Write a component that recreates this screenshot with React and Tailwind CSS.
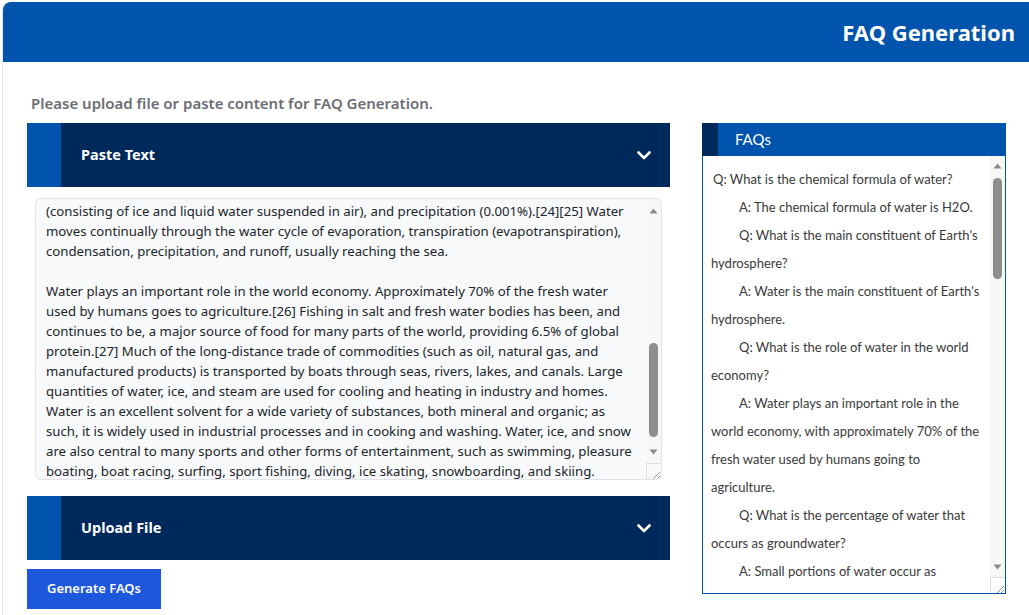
import { useEffect, useRef } from 'react';

const SOURCE_TEXT = `Water is an inorganic compound with the chemical formula H2O. It is a transparent, tasteless, odorless, and nearly colorless chemical substance, and it is the main constituent of Earth's hydrosphere and the fluids of all known living organisms (in which it acts as a solvent[20]). It is vital for all known forms of life, despite not providing food energy or organic micronutrients. Its chemical formula, H2O, indicates that each of its molecules contains one oxygen and two hydrogen atoms, connected by covalent bonds.

Because Earth's environment is relatively close to water's triple point, water exists on Earth as a solid, a liquid, and a gas.[22] It forms precipitation in the form of rain and aerosols in the form of fog. Clouds consist of suspended droplets of water and ice, its solid state.

Water covers about 71% of the Earth's surface, with seas and oceans making up most of the water volume (about 96.5%).[23] Small portions of water occur as groundwater (1.7%), in the glaciers and the ice caps of Antarctica and Greenland (1.7%), and in the air as vapor, clouds (consisting of ice and liquid water suspended in air), and precipitation (0.001%).[24][25] Water moves continually through the water cycle of evaporation, transpiration (evapotranspiration), condensation, precipitation, and runoff, usually reaching the sea.

Water plays an important role in the world economy. Approximately 70% of the fresh water used by humans goes to agriculture.[26] Fishing in salt and fresh water bodies has been, and continues to be, a major source of food for many parts of the world, providing 6.5% of global protein.[27] Much of the long-distance trade of commodities (such as oil, natural gas, and manufactured products) is transported by boats through seas, rivers, lakes, and canals. Large quantities of water, ice, and steam are used for cooling and heating in industry and homes. Water is an excellent solvent for a wide variety of substances, both mineral and organic; as such, it is widely used in industrial processes and in cooking and washing. Water, ice, and snow are also central to many sports and other forms of entertainment, such as swimming, pleasure boating, boat racing, surfing, sport fishing, diving, ice skating, snowboarding, and skiing.`;

const FAQS = [
  { text: 'Q: What is the chemical formula of water?', first: true },
  { text: 'A: The chemical formula of water is H2O.' },
  { text: "Q: What is the main constituent of Earth's hydrosphere?" },
  { text: "A: Water is the main constituent of Earth's hydrosphere." },
  { text: 'Q: What is the role of water in the world economy?' },
  { text: 'A: Water plays an important role in the world economy, with approximately 70% of the fresh water used by humans going to agriculture.' },
  { text: 'Q: What is the percentage of water that occurs as groundwater?' },
  { text: 'A: Small portions of water occur as groundwater (1.7%).' },
];

function Chevron() {
  return (
    <svg width="14" height="9" viewBox="0 0 14 9" fill="none">
      <polyline points="1.5,1.5 7,7 12.5,1.5" stroke="white" strokeWidth="2.6" strokeLinecap="round" strokeLinejoin="round" />
    </svg>
  );
}

function Arrow({ down }) {
  return (
    <svg width="9" height="6" viewBox="0 0 9 6">
      <polygon points={down ? '0.5,0.5 8.5,0.5 4.5,5.5' : '0.5,5.5 8.5,5.5 4.5,0.5'} fill="#8a8a8a" />
    </svg>
  );
}

function ResizeGrip() {
  return (
    <svg width="15" height="16" viewBox="0 0 15 16" fill="none">
      <line x1="13" y1="8" x2="6" y2="15" stroke="#9a9a9a" strokeWidth="1" />
      <line x1="13" y1="12" x2="10" y2="15" stroke="#9a9a9a" strokeWidth="1" />
    </svg>
  );
}

// static drawn scrollbar, headless chrome hides the native one
function ScrollBar({ topGap, thumbGap, thumbHeight, cornerGap, corner }) {
  return (
    <div className="flex w-[15px] shrink-0 flex-col bg-[#f7f7f8]">
      <div style={{ height: topGap }} />
      <div className="flex h-[17px] items-center justify-center">
        <Arrow />
      </div>
      <div className="flex flex-1 justify-center">
        <div className="w-[9px] rounded-full bg-[#8e8e8e]" style={{ marginTop: thumbGap, height: thumbHeight }} />
      </div>
      <div className="flex h-[17px] items-center justify-center">
        <Arrow down />
      </div>
      <div style={{ height: cornerGap }} />
      <div className={`h-[16px] border-l border-t border-[#dedede] ${corner}`}>
        <ResizeGrip />
      </div>
    </div>
  );
}

function AccordionBar({ title }) {
  return (
    <div className="flex h-[64px] bg-[#00295b]">
      <div className="w-[34px] bg-[#0054ad]" />
      <div className="flex flex-1 items-center justify-between pl-[20px] pr-[19px]">
        <span className="text-[14.5px] font-bold text-white">{title}</span>
        <Chevron />
      </div>
    </div>
  );
}

export default function App() {
  const areaRef = useRef(null);

  useEffect(() => {
    const el = areaRef.current;
    if (el) el.scrollTop = el.scrollHeight - el.clientHeight - 3;
  }, []);

  return (
    <div className="h-[615px] overflow-hidden bg-white pl-[2px] pt-[2px] font-['Noto_Sans',sans-serif]">
      <div className="h-full rounded-tl-[8px] border-l border-[#e3e3e3]">
        {/* Header */}
        <div className="flex h-[60px] items-center justify-end rounded-tl-[8px] bg-[#0054ad] pr-[14px]">
          <h1 className="text-[22px] font-bold text-white">FAQ Generation</h1>
        </div>

        <div className="pl-[24px] pt-[31px]">
          <p className="mb-[10px] pl-[4px] text-[15px] leading-[20px] font-semibold text-[#6b6e74]">
            Please upload file or paste content for FAQ Generation.
          </p>

          <div className="flex">
            {/* Left column */}
            <div className="w-[643px]">
              <AccordionBar title="Paste Text" />
              <div className="px-[8px] pb-[16px] pt-[11px]">
                <div className="flex h-[282px] overflow-hidden rounded-[6px] border border-[#e2e4e8] bg-[#f8f9fb]">
                  <textarea
                    ref={areaRef}
                    readOnly
                    defaultValue={SOURCE_TEXT}
                    className="block h-full flex-1 resize-none overflow-hidden bg-transparent pl-[10px] pr-[10px] pt-[6px] pb-[1px] text-[13.2px] leading-[20px] text-[#212529] outline-none"
                  />
                  <ScrollBar topGap={3} thumbGap={124} thumbHeight={94} cornerGap={3} corner="bg-[#f8f9fb]" />
                </div>
              </div>
              <AccordionBar title="Upload File" />
              <button className="mt-[9px] h-[40px] w-[134px] bg-[#1d57dc] text-[13px] font-semibold text-white">
                Generate FAQs
              </button>
            </div>

            {/* Right column */}
            <div className="ml-[32px] w-[304px]">
              <div className="flex h-[33px] bg-[#0054ad]">
                <div className="w-[16px] bg-[#00295b]" />
                <span className="pl-[17px] text-[15px] leading-[33px] text-white font-['Lato',sans-serif]">FAQs</span>
              </div>
              <div className="flex h-[438px] border border-t-0 border-[#0054ad] bg-white">
                <div className="h-[425px] flex-1 overflow-hidden pl-[8px] pr-[8px] pt-[9px] font-['Lato',sans-serif] text-[13px] leading-[28px] text-[#3a3a3a]">
                  {FAQS.map((f, i) => (
                    <p key={i} className={f.first ? 'indent-[2px]' : 'indent-[28px]'}>
                      {f.text}
                    </p>
                  ))}
                </div>
                <ScrollBar topGap={1} thumbGap={4} thumbHeight={101} cornerGap={2} corner="bg-white" />
              </div>
            </div>
          </div>
        </div>
      </div>
    </div>
  );
}
